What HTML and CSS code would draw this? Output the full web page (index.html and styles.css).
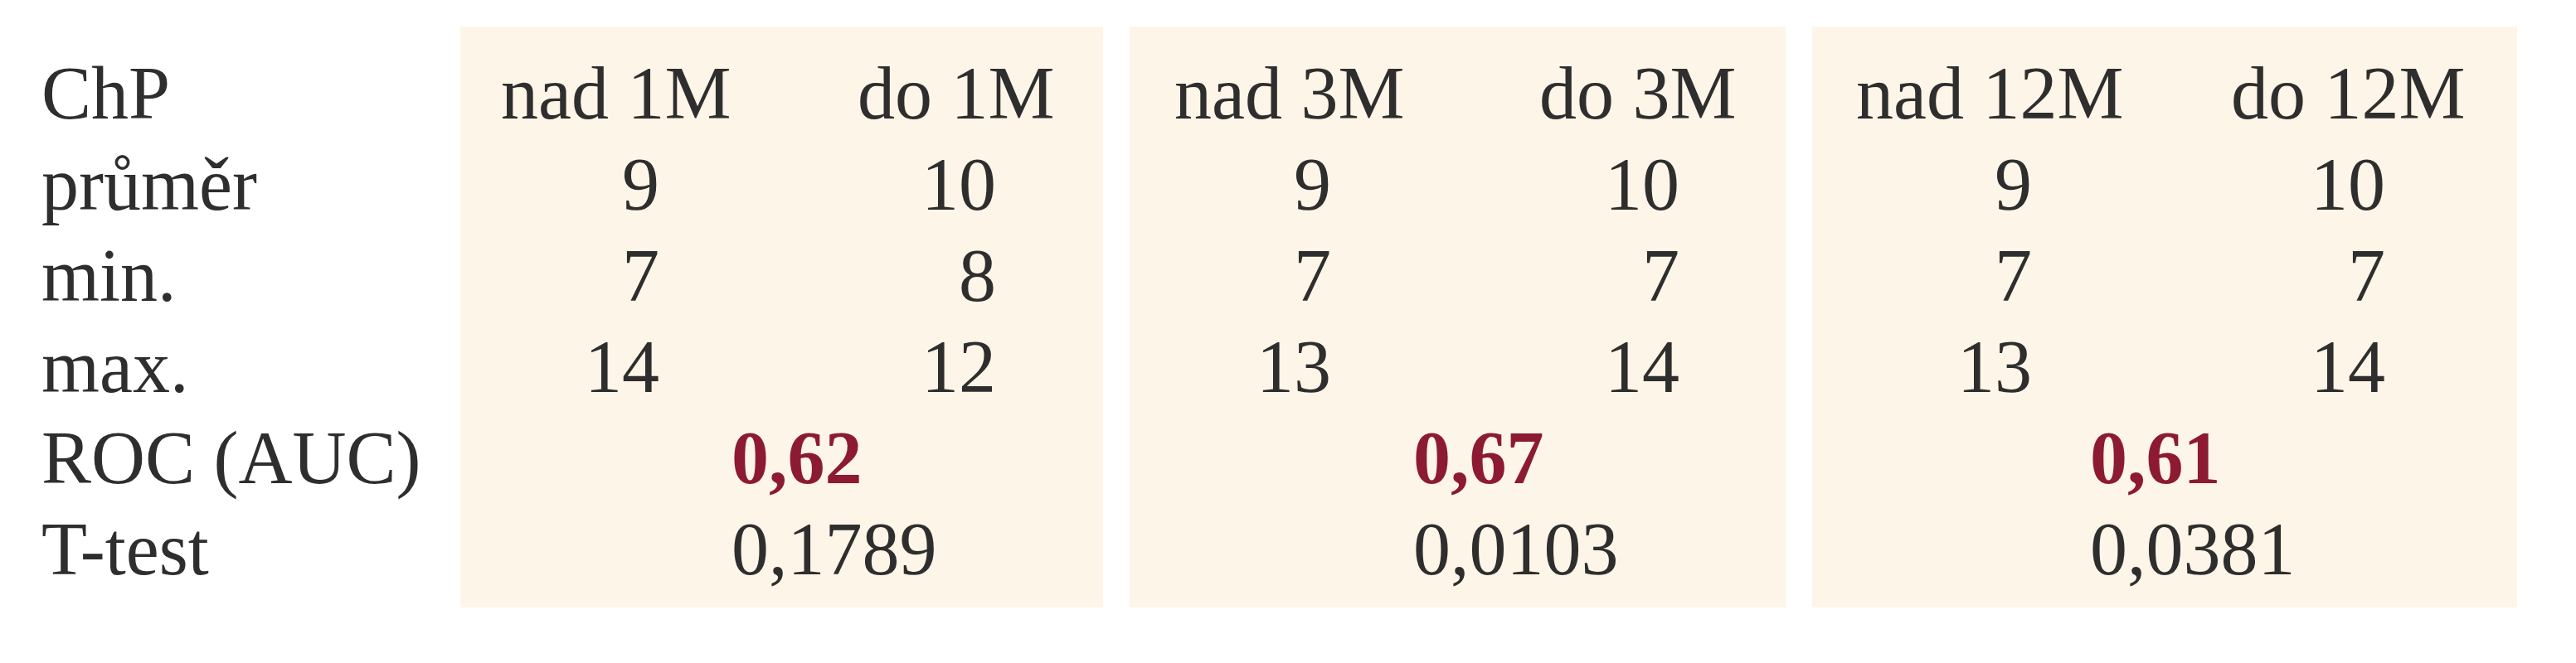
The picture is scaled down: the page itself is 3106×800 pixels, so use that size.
FILE: index.html
```html
<!DOCTYPE html>
<html lang="cs">
<head>
<meta charset="utf-8">
<title>ChP</title>
<link rel="stylesheet" href="styles.css">
</head>
<body>
<div class="table">
  <div class="labels">
    <div class="row">ChP</div>
    <div class="row">průměr</div>
    <div class="row">min.</div>
    <div class="row">max.</div>
    <div class="row">ROC (AUC)</div>
    <div class="row">T-test</div>
  </div>
  <div class="panel p1">
    <div class="row head"><span>nad 1M</span><span>do 1M</span></div>
    <div class="row num"><span>9</span><span>10</span></div>
    <div class="row num"><span>7</span><span>8</span></div>
    <div class="row num"><span>14</span><span>12</span></div>
    <div class="row merged"><span class="auc">0,62</span></div>
    <div class="row merged"><span>0,1789</span></div>
  </div>
  <div class="panel p2">
    <div class="row head"><span>nad 3M</span><span>do 3M</span></div>
    <div class="row num"><span>9</span><span>10</span></div>
    <div class="row num"><span>7</span><span>7</span></div>
    <div class="row num"><span>13</span><span>14</span></div>
    <div class="row merged"><span class="auc">0,67</span></div>
    <div class="row merged"><span>0,0103</span></div>
  </div>
  <div class="panel p3">
    <div class="row head"><span>nad 12M</span><span>do 12M</span></div>
    <div class="row num"><span>9</span><span>10</span></div>
    <div class="row num"><span>7</span><span>7</span></div>
    <div class="row num"><span>13</span><span>14</span></div>
    <div class="row merged"><span class="auc">0,61</span></div>
    <div class="row merged"><span>0,0381</span></div>
  </div>
</div>
</body>
</html>
```

FILE: styles.css
```css
html, body {
  margin: 0;
  padding: 0;
  background: #ffffff;
}

body {
  font-family: "Liberation Serif", "Times New Roman", serif;
  font-size: 90px;
  color: #2e2e2e;
  width: 3106px;
  height: 800px;
  overflow: hidden;
}

.table {
  display: flex;
  align-items: flex-start;
  padding-top: 32px;
}

.row {
  height: 110px;
  line-height: 110px;
  white-space: nowrap;
}

.labels {
  box-sizing: border-box;
  width: 555px;
  padding-left: 50px;
  padding-top: 26px;
}

.panel {
  box-sizing: border-box;
  background: #fdf5e7;
  padding-top: 26px;
  padding-bottom: 15px;
}

.p1 {
  width: 775px;
  margin-right: 32px;
  --h1: 49px;
  --h2: 479px;
  --c1: 240px;
  --c2: 646px;
  --m: 327px;
}

.p2 {
  width: 791px;
  margin-right: 32px;
  --h1: 54px;
  --h2: 494px;
  --c1: 243px;
  --c2: 663px;
  --m: 342px;
}

.p3 {
  width: 850px;
  --h1: 53px;
  --h2: 505px;
  --c1: 265px;
  --c2: 691px;
  --m: 335px;
}

.head {
  display: grid;
  grid-template-columns: calc(var(--h2) - var(--h1)) auto;
  padding-left: var(--h1);
}

.num {
  display: grid;
  grid-template-columns: var(--c1) calc(var(--c2) - var(--c1));
  text-align: right;
}

.merged {
  padding-left: var(--m);
}

.auc {
  color: #8c1a33;
  font-weight: bold;
}
```
